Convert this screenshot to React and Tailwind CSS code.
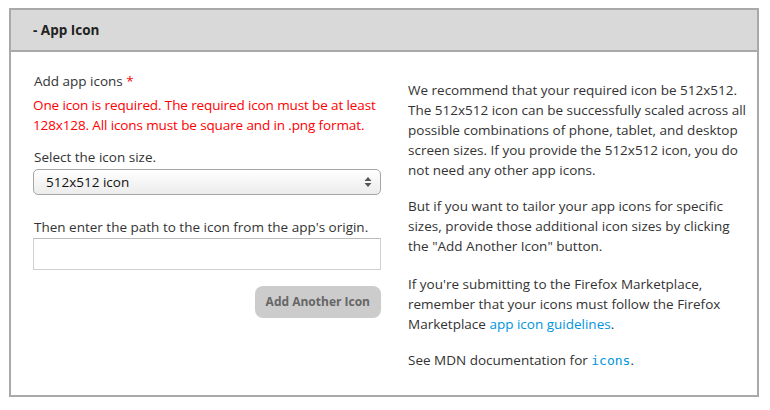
import React from 'react';

function SelectArrows() {
  return (
    <svg width="8" height="12" viewBox="0 0 8 12" className="text-[#555]">
      <path d="M4 1 L7.5 5 L0.5 5 Z" fill="currentColor" />
      <path d="M4 11 L7.5 7 L0.5 7 Z" fill="currentColor" />
    </svg>
  );
}

export default function App() {
  return (
    <div className="w-[770px] h-[410px] bg-white pt-2 pl-[9px] font-['Open_Sans',sans-serif] text-[13.5px] leading-[20px] text-[#333]">
      <section className="w-[750px] h-[389px] border-2 border-[#a9a9a9] flex flex-col">
        <header className="h-[42px] shrink-0 bg-[#d9d9d9] border-b-2 border-[#a9a9a9] pl-[22px] flex items-center">
          <h2 className="font-bold text-[13.5px] text-[#222]">- App Icon</h2>
        </header>
        <div className="flex pl-[22px] pt-[19px]">
          {/* left column: the form */}
          <div className="w-[348px] flex flex-col">
            <label className="pl-px">
              Add app icons <span className="text-[#f00]">*</span>
            </label>
            <p className="mt-1 text-[#f00] tracking-[-0.12px]">
              One icon is required. The required icon must be at least 128x128. All icons must be square and in .png format.
            </p>
            <label className="mt-3 pl-px">Select the icon size.</label>
            <div className="mt-[2px] h-[26px] rounded-[5px] border border-[#a6a6a6] bg-gradient-to-b from-white to-[#ececec] flex items-center justify-between pl-[12px] pr-[8px] text-[#111]">
              <span>512x512 icon</span>
              <SelectArrows />
            </div>
            <label className="mt-[22px] pl-px">Then enter the path to the icon from the app's origin.</label>
            <input
              type="text"
              className="mt-px h-[32px] border border-[#d0d0d0] border-t-[#bbb] bg-white outline-none"
            />
            <div className="flex justify-end mt-4">
              <button className="h-[32px] px-[11px] rounded-[8px] bg-[#cccccc] text-[#666] font-bold text-[12px]">
                Add Another Icon
              </button>
            </div>
          </div>

          {/* right column: help text */}
          <div className="w-[342px] ml-[27px] pt-[9px]">
            <p className="mb-4">
              We recommend that your required icon be 512x512. The 512x512 icon can be successfully scaled across all possible combinations of phone, tablet, and desktop screen sizes. If you provide the 512x512 icon, you do not need any other app icons.
            </p>
            <p className="mb-[18px]">
              But if you want to tailor your app icons for specific sizes, provide those additional icon sizes by clicking the "Add Another Icon" button.
            </p>
            <p className="mb-4">
              If you're submitting to the Firefox Marketplace, remember that your icons must follow the Firefox Marketplace <span className="text-[#0095dd]">app icon guidelines</span>.
            </p>
            <p>
              See MDN documentation for <code className="font-['DejaVu_Sans_Mono',monospace] text-[13px] text-[#0095dd]">icons</code>.
            </p>
          </div>
        </div>
      </section>
    </div>
  );
}
